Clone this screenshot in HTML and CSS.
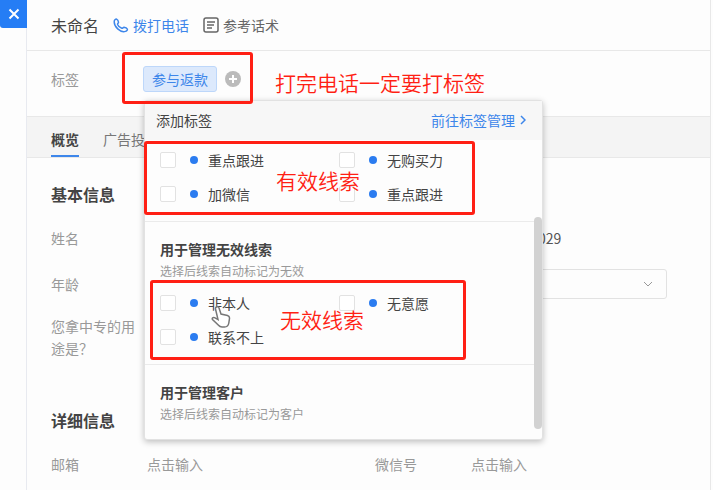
FILE: index.html
```html
<!DOCTYPE html>
<html lang="zh-CN">
  <head>
    <meta charset="UTF-8" />
    <meta name="viewport" content="width=device-width, initial-scale=1.0" />
    <title>线索详情</title>
    <link rel="stylesheet" href="styles.css">
  </head>
  <body>
    <div class="page">
      <!-- 左侧关闭按钮 -->
      <aside class="side">
        <button class="close" aria-label="关闭">
          <svg width="12" height="12" viewBox="0 0 12 12"><path d="M1.5 1.5l9 9M10.5 1.5l-9 9" /></svg>
        </button>
      </aside>

      <main class="drawer">
        <header class="header">
          <h1>未命名</h1>
          <a class="call" href="#">
            <svg width="16" height="16" viewBox="0 0 16 16"><path d="M1.3 4C1.600 2.800 2.700 1.800 3.600 2.200c1 .5 1.800 2 1.900 3 .1.900-1.200 1.300-.9 2.200.6 1.600 2.600 3.400 4.200 3.900.9.300 1.300-1.100 2.200-1 1.200.2 2.800.8 3.300 1.700.4.900-.8 2.100-1.900 2.400C7.500 15.800.5 9.800 1.300 4z" /></svg>
            拨打电话
          </a>
          <a class="script" href="#">
            <svg width="16" height="16" viewBox="0 0 16 16"><rect x="1" y="1" width="14" height="14" rx="2" /><path d="M4 5h8M4 8h7M4 11h5" /></svg>
            参考话术
          </a>
        </header>

        <!-- 标签 -->
        <section class="tags">
          <span class="label">标签</span>
          <span class="tag">参与返款</span>
          <button class="add" aria-label="添加标签">
            <svg width="16" height="16" viewBox="0 0 16 16"><circle cx="8" cy="8" r="8" /><path d="M8 4v8M4 8h8" /></svg>
          </button>

          <!-- 添加标签弹层 -->
          <div class="popover">
            <div class="popover-head">
              <span>添加标签</span>
              <a href="#">前往标签管理
                <svg width="6" height="10" viewBox="0 0 6 10"><path d="M1 1l4 4-4 4" /></svg>
              </a>
            </div>
            <div class="popover-body">
              <div class="group">
                <div class="options">
                  <label><input type="checkbox" /><i class="dot"></i>重点跟进</label>
                  <label><input type="checkbox" /><i class="dot"></i>无购买力</label>
                  <label><input type="checkbox" /><i class="dot"></i>加微信</label>
                  <label><input type="checkbox" /><i class="dot"></i>重点跟进</label>
                </div>
              </div>
              <div class="group">
                <h3>用于管理无效线索</h3>
                <p>选择后线索自动标记为无效</p>
                <div class="options">
                  <label><input type="checkbox" /><i class="dot"></i>非本人</label>
                  <label><input type="checkbox" /><i class="dot"></i>无意愿</label>
                  <label><input type="checkbox" /><i class="dot"></i>联系不上</label>
                </div>
              </div>
              <div class="group">
                <h3>用于管理客户</h3>
                <p>选择后线索自动标记为客户</p>
              </div>
            </div>
            <div class="scrollbar"></div>
            <svg class="cursor" width="20" height="24" viewBox="0 0 20 24"><path d="M5.500 2c1.200-.6 2.200 0 2.600 1.200L10 9l6.500 1.500c1.600.5 2.200 1.500 2 3l-.7 4.500c-.4 2.500-2 4-4.300 4H11c-1.500 0-2.500-.5-3.500-1.700L1.500 14.500c-.8-1.200.6-2.500 2-1.800L7 14.500 4.500 4c-.2-.9.2-1.700 1-2z" /></svg>
          </div>
        </section>

        <nav class="tabs">
          <a class="active" href="#">概览</a>
          <a href="#">广告投</a>
        </nav>

        <section class="info">
          <h2>基本信息</h2>
          <div class="fields">
            <span class="label">姓名</span>
            <span class="phone">029</span>
            <label class="label" for="age">年龄</label>
            <select id="age"><option></option></select>
            <span class="label">您拿中专的用途是？</span>
          </div>
        </section>

        <section class="info">
          <h2>详细信息</h2>
          <div class="details">
            <label class="label" for="mail">邮箱</label>
            <input id="mail" type="text" placeholder="点击输入" />
            <label class="label" for="wechat">微信号</label>
            <input id="wechat" type="text" placeholder="点击输入" />
          </div>
        </section>
      </main>

      <!-- 标注 -->
      <div class="mark mark-tag"></div>
      <div class="note note-tag">打完电话一定要打标签</div>
      <div class="mark mark-valid"></div>
      <div class="note note-valid">有效线索</div>
      <div class="mark mark-invalid"></div>
      <div class="note note-invalid">无效线索</div>
    </div>
  </body>
</html>
```

FILE: styles.css
```css
* {
  box-sizing: border-box;
}
body {
  margin: 0;
  font-family: "Noto Sans CJK SC", sans-serif;
  font-size: 14px;
  line-height: 22px;
  color: #555;
  background-color: #fdfdfd;
}
h1,
h2,
h3,
p {
  margin: 0;
}
a {
  color: #3d86ea;
  text-decoration: none;
}
button {
  padding: 0;
  border: none;
  background: none;
  cursor: pointer;
}
svg {
  display: block;
  fill: none;
  stroke: currentColor;
}
.page {
  position: relative;
  display: flex;
  min-height: 100vh;
  padding-right: 2px;
  overflow: hidden;
}
.side {
  width: 26px;
}
.close {
  display: flex;
  align-items: center;
  justify-content: center;
  width: 27px;
  height: 28px;
  position: relative;
  color: #fff;
  background-color: #257df5;
  border-radius: 0 0 0 3px;
}
.close svg {
  stroke-width: 2;
}
.drawer {
  flex: 1;
  border-left: 1px solid #e8eaf0;
  border-right: 1px solid #e8e8e8;
}
.header {
  display: flex;
  align-items: center;
  gap: 14px;
  height: 51px;
  padding: 0 24px;
  border-bottom: 1px solid #e8e8e8;
}
.header h1 {
  font-size: 16px;
  font-weight: 400;
  color: #444;
}
.header a {
  display: flex;
  align-items: center;
  gap: 4px;
}
.header svg {
  stroke-width: 1.5;
}
.header .script {
  color: #666;
}
.label {
  color: #999;
}

/* 标签栏 */
.tags {
  position: relative;
  display: flex;
  align-items: center;
  height: 65px;
  padding: 0 24px 10px;
}
.tags .label {
  width: 92px;
}
.tag {
  padding: 1px 8px;
  color: #3d86ea;
  background-color: #dce9fc;
  border: 1px solid #bdd7fa;
  border-radius: 3px;
}
.add {
  margin-left: 8px;
}
.add circle {
  fill: #bbb;
  stroke: none;
}
.add path {
  stroke: #fff;
  stroke-width: 2;
}

/* 弹层 */
.popover {
  position: absolute;
  z-index: 1;
  top: 49px;
  left: 117px;
  width: 399px;
  color: #444;
  background-color: #fdfdfd;
  border: 1px solid #e2e2e2;
  border-radius: 3px;
  box-shadow: 0 2px 6px rgba(0, 0, 0, 0.25);
}
.popover-head {
  display: flex;
  align-items: center;
  justify-content: space-between;
  height: 39px;
  padding: 0 16px 2px 11px;
  background-color: #f7f7f7;
}
.popover-head a {
  display: flex;
  align-items: center;
  gap: 5px;
}
.popover-head svg {
  stroke-width: 1.5;
}
.popover-body {
  padding-right: 8px;
}
.group {
  padding: 16px 16px 16px 15px;
  border-bottom: 1px solid #ebebeb;
}
.group:first-child {
  padding-top: 9px;
}
.group:last-child {
  padding-bottom: 14px;
  border-bottom: none;
}
.group h3 {
  font-size: 14px;
  font-weight: 700;
  color: #444;
}
.group p {
  font-size: 12px;
  color: #999;
}
.options {
  display: grid;
  grid-template-columns: 1fr 1fr;
  row-gap: 12px;
}
.group p + .options {
  padding-top: 10px;
}
.options label {
  display: flex;
  align-items: center;
}
.options input {
  appearance: none;
  width: 16px;
  height: 16px;
  margin: 0 14px 0 0;
  background-color: #fff;
  border: 1px solid #e2e2e2;
  border-radius: 2px;
}
.dot {
  width: 8px;
  height: 8px;
  margin-right: 10px;
  background-color: #2b7cf0;
  border-radius: 50%;
}
.scrollbar {
  position: absolute;
  top: 116px;
  right: 0;
  bottom: 10px;
  width: 8px;
  background-color: #d2d2d2;
  border-radius: 4px;
}
.cursor {
  position: absolute;
  top: 204px;
  left: 66px;
}
.cursor path {
  fill: #fff;
  stroke: #777;
  stroke-width: 1.5;
}

/* 标签页 */
.tabs {
  display: flex;
  gap: 24px;
  height: 42px;
  padding: 0 24px;
  background-color: #f4f4f4;
  border-top: 1px solid #e8e8e8;
  border-bottom: 1px solid #e8e8e8;
}
.tabs a {
  padding: 11px 0 5px;
  color: #777;
}
.tabs .active {
  font-weight: 700;
  color: #444;
  border-bottom: 2px solid #3d86ea;
}

/* 资料 */
.info {
  padding: 25px 43px 0 24px;
}
.info h2 {
  font-size: 16px;
  font-weight: 700;
  color: #444;
}
.fields {
  display: grid;
  grid-template-columns: 84px 1fr;
  grid-template-rows: 30px;
  column-gap: 336px;
  row-gap: 16px;
  align-items: center;
  padding: 18px 0 25px;
}
.phone {
  padding-left: 67px;
}
.fields select {
  appearance: none;
  width: 100%;
  height: 30px;
  border: 1px solid #e2e2e2;
  border-radius: 3px;
  background: url("data:image/svg+xml,%3Csvg xmlns='http://www.w3.org/2000/svg' width='10' height='6'%3E%3Cpath d='M1 1l4 4 4-4' fill='none' stroke='%23999'/%3E%3C/svg%3E") no-repeat right 13px center;
}
.details {
  display: grid;
  grid-template-columns: 96px 228px 96px 1fr;
  padding-top: 22px;
}
.details input {
  width: 100%;
  padding: 0;
  border: none;
  background: none;
  font: inherit;
}
.details input::placeholder {
  color: #999;
}

/* 红色标注 */
.mark {
  position: absolute;
  z-index: 2;
  border: 3px solid #ff1f14;
  border-radius: 3px;
}
.mark-tag {
  top: 52px;
  left: 122px;
  width: 131px;
  height: 52px;
}
.mark-valid {
  top: 141px;
  left: 144px;
  width: 331px;
  height: 74px;
}
.mark-invalid {
  top: 280px;
  left: 150px;
  width: 316px;
  height: 80px;
}
.note {
  position: absolute;
  z-index: 2;
  font-size: 21px;
  font-weight: 350;
  line-height: 30px;
  color: #ff1f14;
}
.note-tag {
  top: 67px;
  left: 275px;
}
.note-valid {
  top: 165px;
  left: 276px;
}
.note-invalid {
  top: 304px;
  left: 280px;
}
```
